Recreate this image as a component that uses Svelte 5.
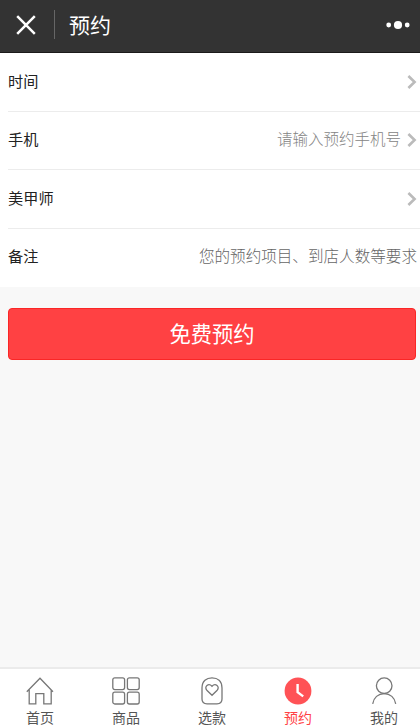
<script>
	const fields = [
		{ label: "时间", arrow: true },
		{ label: "手机", hint: "请输入预约手机号", arrow: true },
		{ label: "美甲师", arrow: true },
		{ label: "备注", hint: "您的预约项目、到店人数等要求", dark: true }
	];

	const tabs = [
		{ id: "home", label: "首页" },
		{ id: "goods", label: "商品" },
		{ id: "style", label: "选款" },
		{ id: "booking", label: "预约" },
		{ id: "mine", label: "我的" }
	];

	let active = $state("booking");
</script>

<div class="page">
	<header>
		<svg class="close" width="20" height="20" viewBox="0 0 20 20">
			<path d="M1.2 1.2 18.8 18.8M18.8 1.2 1.2 18.8" />
		</svg>
		<span class="divider"></span>
		<h1>预约</h1>
		<svg class="more" width="24" height="10" viewBox="0 0 24 10">
			<circle cx="2.7" cy="5" r="2.4" />
			<circle cx="12" cy="5" r="4.1" />
			<circle cx="21.2" cy="5" r="2.4" />
		</svg>
	</header>

	<section>
		{#each fields as { label, hint, arrow, dark }}
			<div class="row">
				<span class="label">{label}</span>
				{#if hint}
					<span class="hint" class:dark>{hint}</span>
				{/if}
				{#if arrow}
					<svg class="arrow" width="10" height="14" viewBox="0 0 10 14">
						<path d="M1.4 1 7.6 7 1.4 13" />
					</svg>
				{/if}
			</div>
		{/each}
	</section>

	<main>
		<button class="submit">免费预约</button>
	</main>

	<nav>
		{#each tabs as { id, label }}
			<button class="tab" class:active={active === id} onclick={() => (active = id)}>
				<svg width="28" height="28" viewBox="0 0 28 28">
					{#if id === "home"}
						<path d="M.8 14.7 14 1.3 27 14.7M3.2 12.5V26.8H9.8V16.7H17.8V26.8H25.2V12.5" />
					{:else if id === "goods"}
						<rect x=".8" y=".8" width="11.8" height="11.8" rx="2" />
						<rect x="15.4" y=".8" width="11.8" height="11.8" rx="2" />
						<rect x=".8" y="15.2" width="11.8" height="11.8" rx="2" />
						<rect x="15.4" y="15.2" width="11.8" height="11.8" rx="2" />
					{:else if id === "style"}
						<path d="M4 11C4 4 8.5.8 14 .8S24 4 24 11V22C24 25.5 22.5 26.8 19 26.8H9C5.5 26.8 4 25.5 4 22Z" />
						<path d="M14 18.3 8.8 13.2C5.7 9.6 10.6 5.4 14 9.3 17.4 5.4 22.3 9.6 19.2 13.2Z" />
					{:else if id === "booking"}
						<circle class="face" cx="14" cy="14" r="13.4" />
						<path class="hands" d="M13.6 7V15.2L19.2 19.4" />
					{:else}
						<circle cx="14.2" cy="8.7" r="7.8" />
						<path d="M2.7 26.8C3.6 20.6 8.2 16.6 14.2 16.6S24.8 20.6 25.7 26.8" />
					{/if}
				</svg>
				<span>{label}</span>
			</button>
		{/each}
	</nav>
</div>

<style>
	:global(body) {
		overflow: hidden;
	}

	.page {
		display: flex;
		flex-direction: column;
		height: 725px;
		overflow: hidden;
		background: #f8f8f8;
		font-family: "Noto Sans CJK SC", sans-serif;
	}

	header {
		display: flex;
		flex: none;
		align-items: center;
		box-sizing: border-box;
		height: 53px;
		padding: 0 10px 3px 16px;
		background: #333;
		border-bottom: 1px solid #1c1a1a;
	}

	.close {
		fill: none;
		stroke: #fff;
		stroke-width: 2.5;
	}

	.divider {
		width: 1px;
		height: 29px;
		margin: 0 14px 0 18px;
		background: #666;
	}

	h1 {
		flex: 1;
		margin: 0 0 2px;
		color: #fff;
		font-size: 21px;
		font-weight: 400;
		line-height: 30px;
	}

	.more {
		fill: #fff;
	}

	section {
		flex: none;
		padding-left: 8px;
		background: #fff;
	}

	.row {
		display: flex;
		align-items: center;
		box-sizing: border-box;
		height: 58.5px;
		padding: 0 3px 4px 0;
		border-bottom: 1px solid #ececec;
		font-size: 15.5px;
		line-height: 24px;
	}

	.row:last-child {
		border-bottom-color: transparent;
	}

	.label {
		flex: 1;
		color: #222;
		font-size: 15.2px;
	}

	.hint {
		color: #848484;
		font-weight: 300;
	}

	.hint.dark {
		color: #666;
		font-size: 15.58px;
	}

	.arrow {
		margin: 4px 0 0 6px;
		fill: none;
		stroke: #bbb;
		stroke-width: 2.6;
	}

	main {
		flex: 1;
		padding: 21px 4px 0 8px;
	}

	button {
		padding: 0;
		font-family: inherit;
	}

	.submit {
		display: block;
		width: 100%;
		height: 52px;
		padding-bottom: 3px;
		border: 1px solid #fb2626;
		border-radius: 4px;
		background: #ff4143;
		color: #fff;
		font-size: 21.3px;
		line-height: 46px;
	}

	nav {
		display: flex;
		flex: none;
		justify-content: space-between;
		box-sizing: border-box;
		height: 58px;
		padding: 8px 22px 0 26px;
		background: #fff;
		border-top: 2px solid #ebebeb;
	}

	.tab {
		display: flex;
		flex-direction: column;
		align-items: center;
		width: 28px;
		border: 0;
		background: none;
		color: #555;
		font-size: 14px;
		line-height: 16px;
		white-space: nowrap;
	}

	.tab svg {
		flex: none;
		fill: none;
		stroke: #777;
		stroke-width: 1.3;
	}

	.tab span {
		margin-top: 4px;
	}

	.tab.active {
		color: #ff4143;
	}

	.tab .face {
		fill: #ff5256;
		stroke: none;
	}

	.tab .hands {
		stroke: #fff;
		stroke-width: 2.4;
	}
</style>
